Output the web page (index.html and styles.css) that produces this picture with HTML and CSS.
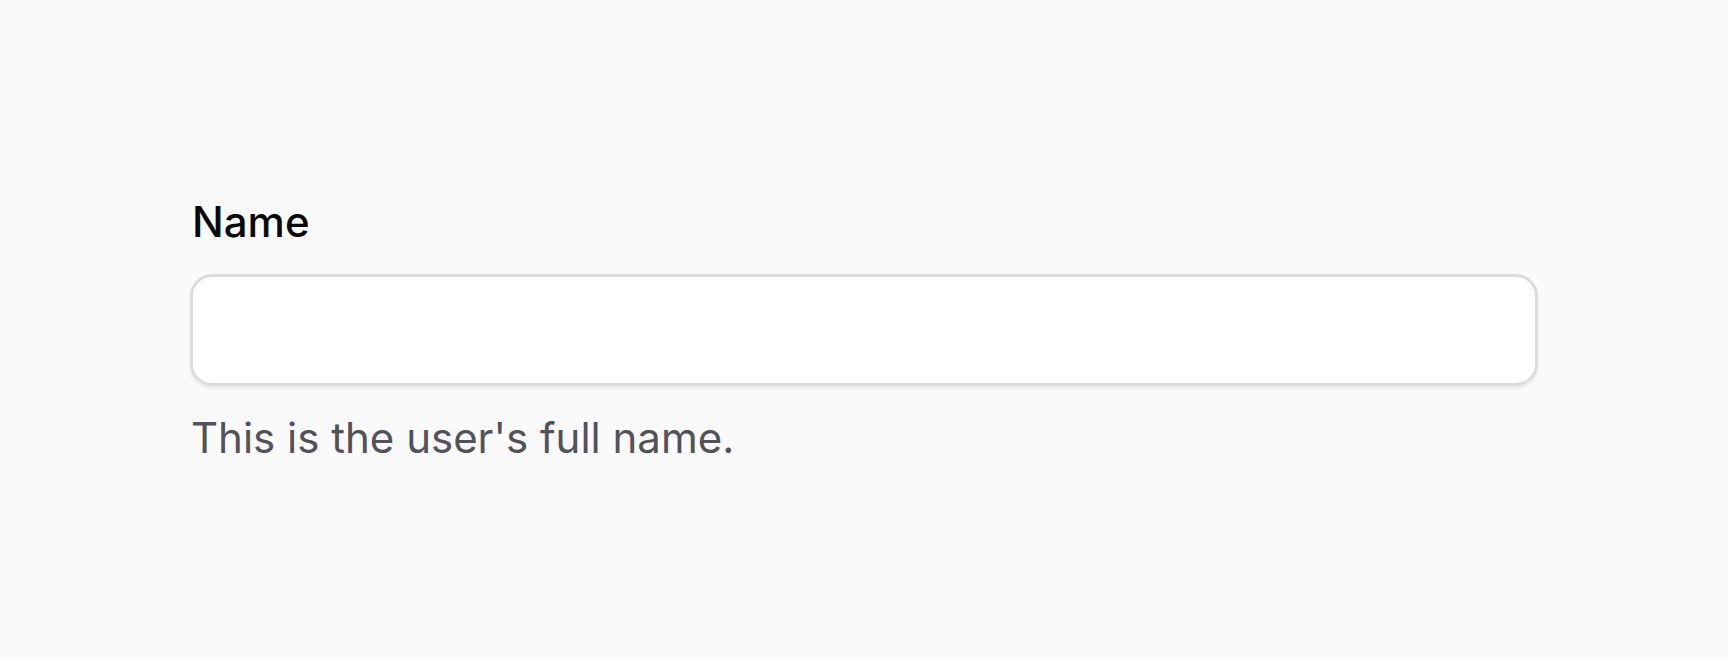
FILE: index.html
```html
<!DOCTYPE html>
<html lang="en">
<head>
<meta charset="utf-8">
<title>Name field</title>
<link rel="stylesheet" href="styles.css">
</head>
<body>
<main class="page">
  <div class="field">
    <label class="label" for="name">Name</label>
    <input class="input" id="name" type="text">
    <p class="help">This is the user's full name.</p>
  </div>
</main>
</body>
</html>
```

FILE: styles.css
```css
html, body {
  margin: 0;
  padding: 0;
  background: #fafafa;
}
body {
  font-family: Inter, "Noto Sans", "Liberation Sans", sans-serif;
  width: 1728px;
  height: 660px;
  overflow: hidden;
}
.page {
  display: flex;
  justify-content: center;
  padding-top: 201px;
}
.field {
  width: 1348px;
  display: flex;
  flex-direction: column;
}
.label {
  font-size: 42px;
  line-height: 42px;
  font-weight: 500;
  color: #09090b;
  padding-left: 2px;
}
.input {
  margin-top: 31px;
  box-sizing: border-box;
  height: 112px;
  width: 100%;
  border: 3px solid #dcdcdc;
  border-radius: 22px;
  background: #ffffff;
  box-shadow: 0 3px 3px rgba(0, 0, 0, 0.06);
  outline: none;
  font: inherit;
  font-size: 42px;
  padding: 0 36px;
}
.help {
  margin: 22px 0 0;
  font-size: 42px;
  line-height: 60px;
  color: #52525b;
  padding-left: 1px;
}
```
